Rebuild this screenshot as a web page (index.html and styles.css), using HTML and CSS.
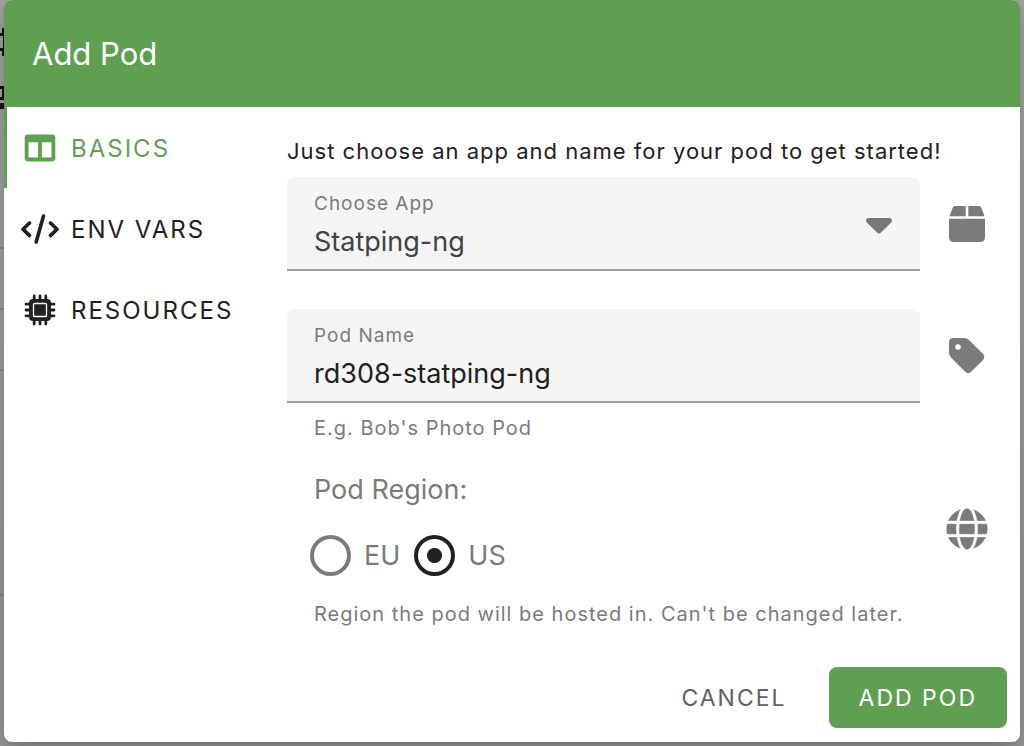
FILE: index.html
```html
<!DOCTYPE html>
<html lang="en">
<head>
  <meta charset="UTF-8" />
  <meta name="viewport" content="width=device-width, initial-scale=1" />
  <title>Add Pod</title>
  <link rel="stylesheet" href="styles.css">
</head>
<body>

  <!-- sliver of the page behind the dialog -->
  <svg class="behind" width="4" height="746" viewBox="0 0 4 746" aria-hidden="true">
    <path fill="#111" d="M2 28h2v5H2zM0 33h4v3H0zM3 36h1v12H3zM0 48h4v3H0zM2 51h2v5H2zM0 86h4v14H0v-3h2v-8H0zM0 103h4v6H0z"/>
    <path fill="#777" d="M0 247h4v2H0zM0 308h4v2H0zM0 369h4v2H0zM0 594h4v2H0z"/>
  </svg>

  <form class="dialog">
    <header class="dialog-header">
      <h1>Add Pod</h1>
    </header>

    <div class="dialog-body">
      <nav class="tabs">
        <a href="#basics" class="tab active">
          <svg width="38" height="32" viewBox="-62 -8 636 528" fill="currentColor" aria-hidden="true">
            <path d="M464 32H48C21.5 32 0 53.500 0 80v352c0 26.500 21.500 48 48 48h416c26.500 0 48-21.500 48-48V80c0-26.500-21.500-48-48-48zM224 416H64V160h160v256zm224 0H288V160h160v256z"/>
          </svg>
          Basics
        </a>
        <a href="#env" class="tab">
          <svg width="38" height="32" viewBox="0 0 38 32" fill="none" stroke="currentColor" stroke-width="3.600" stroke-linecap="round" stroke-linejoin="round" aria-hidden="true">
            <path d="M8.500 10L2 16.300L8.500 22.600M29.500 10L36 16.300L29.500 22.600M22.500 3L15.200 29"/>
          </svg>
          Env Vars
        </a>
        <a href="#resources" class="tab">
          <svg width="38" height="32" viewBox="0 0 38 32" aria-hidden="true">
            <path stroke="currentColor" stroke-width="2.800" stroke-linecap="round" d="M13.200 2V30M19 2V30M24.800 2V30M5 10.200H33M5 16H33M5 21.800H33"/>
            <rect x="8" y="5" width="22" height="22" rx="4" fill="currentColor"/>
            <rect x="12.500" y="9.500" width="13" height="13" rx="1" fill="currentColor" stroke="#fff" stroke-width="1.300"/>
          </svg>
          Resources
        </a>
      </nav>

      <section class="panel" id="basics">
        <p class="intro">Just choose an app and name for your pod to get started!</p>

        <div class="row">
          <div class="field">
            <label for="app">Choose App</label>
            <select id="app">
              <option>Statping-ng</option>
            </select>
            <svg class="caret" width="26" height="16" viewBox="0 0 26 16" fill="currentColor" aria-hidden="true">
              <path d="M2 0H24Q26 0 26 2.500Q26 3.800 25 4.800L15 14.500Q13 16.500 11 14.500L1 4.800Q0 3.800 0 2.500Q0 0 2 0z"/>
            </svg>
          </div>
          <svg class="icon" width="42" height="42" viewBox="0 0 42 42" fill="currentColor" aria-hidden="true">
            <path d="M9 3H19.700V13.300H3.400L6.600 5Q7.400 3 9 3zM22.300 3H33Q34.600 3 35.400 5L38.600 13.300H22.300zM3 15.800H39V34Q39 39 34 39H8Q3 39 3 34z"/>
          </svg>
        </div>

        <div class="row">
          <div class="field">
            <label for="name">Pod Name</label>
            <input type="text" id="name" value="rd308-statping-ng">
          </div>
          <svg class="icon" width="42" height="42" viewBox="0 0 42 42" fill="currentColor" fill-rule="evenodd" aria-hidden="true">
            <path d="M7.500 3H18.500Q21 3 23 5L36.800 18.800Q40 22 36.800 25.200L25.400 36.600Q22.200 39.800 19 36.600L5 22.600Q3 20.600 3 18V7.500Q3 3 7.500 3zM12 9.200a2.800 2.800 0 1 0 0 5.600a2.800 2.800 0 1 0 0-5.600z"/>
          </svg>
        </div>
        <p class="hint">E.g. Bob's Photo Pod</p>

        <div class="row region-row">
          <fieldset class="region">
            <legend>Pod Region:</legend>
            <div class="options">
              <label><input type="radio" name="region" value="eu">EU</label>
              <label><input type="radio" name="region" value="us" checked>US</label>
            </div>
          </fieldset>
          <svg class="icon" width="42" height="42" viewBox="-4 4 504 504" fill="currentColor" stroke="#fff" stroke-width="4" aria-hidden="true">
            <path d="M336.500 160C322 70.700 287.800 8 248 8s-74 62.700-88.500 152h177zM152 256c0 22.200 1.200 43.500 3.300 64h185.300c2.100-20.500 3.300-41.800 3.300-64s-1.200-43.500-3.300-64H155.300c-2.100 20.500-3.300 41.800-3.300 64zm324.700-96c-28.600-67.900-86.500-120.400-158-141.600 24.400 33.800 41.200 84.700 50 141.600h108zM177.200 18.400C105.800 39.600 47.800 92.100 19.300 160h108c8.700-56.900 25.500-107.800 49.900-141.600zM487.400 192H372.700c2.100 21 3.300 42.500 3.300 64s-1.200 43-3.300 64h114.600c5.500-20.500 8.600-41.800 8.600-64s-3.100-43.500-8.500-64zM120 256c0-21.500 1.200-43 3.300-64H8.600C3.200 212.500 0 233.800 0 256s3.200 43.500 8.600 64h114.600c-2-21-3.200-42.500-3.200-64zm39.500 96c14.500 89.300 48.700 152 88.500 152s74-62.700 88.500-152h-177zm159.300 141.600c71.400-21.200 129.400-73.700 158-141.600h-108c-8.800 56.900-25.600 107.800-50 141.600zM19.300 352c28.600 67.900 86.500 120.400 158 141.600-24.400-33.800-41.200-84.700-50-141.600h-108z"/>
          </svg>
        </div>
        <p class="hint">Region the pod will be hosted in. Can't be changed later.</p>
      </section>
    </div>

    <footer class="actions">
      <button type="button" class="btn">Cancel</button>
      <button type="submit" class="btn primary">Add Pod</button>
    </footer>
  </form>

</body>
</html>
```
FILE: styles.css
```css
* {
  box-sizing: border-box;
}
body {
  margin: 0;
  padding: 0 4px 4px;
  min-height: 100vh;
  background: linear-gradient(#a6a6a6, #999);
  font-family: Inter, "Liberation Sans", sans-serif;
  color: #212121;
}
.behind {
  position: absolute;
  top: 0;
  left: 0;
}
.dialog {
  display: flex;
  flex-direction: column;
  background: #fff;
  border-radius: 8px;
  box-shadow: 0 6px 20px rgba(0, 0, 0, 0.3);
  overflow: hidden;
}
.dialog-header {
  padding: 33px 28px 32px;
  background: #5f9f52;
  color: #fff;
}
h1 {
  margin: 0;
  font-size: 31px;
  line-height: 42px;
  font-weight: 400;
}
.dialog-body {
  display: flex;
}
.tabs {
  flex: 0 0 283px;
}
.tab {
  display: flex;
  align-items: center;
  gap: 12px;
  height: 81px;
  padding: 1px 0 0 17px;
  color: #212121;
  font-size: 24px;
  letter-spacing: 2px;
  text-decoration: none;
  text-transform: uppercase;
}
.tab.active {
  color: #5f9f52;
  box-shadow: inset 3px 0 #5f9f52;
}
.panel {
  flex: 1;
  padding: 29px 32px 0 0;
}
.intro {
  margin: 0 0 11px;
  font-size: 22px;
  line-height: 30px;
  letter-spacing: 1px;
}
.row {
  display: flex;
  align-items: center;
  gap: 26px;
}
.row + .row {
  margin-top: 38px;
}
.field {
  position: relative;
  flex: 1;
  height: 94px;
  padding: 14px 27px 0;
  background: #f5f5f5;
  border-bottom: 2px solid #9e9e9e;
  border-radius: 8px 8px 0 0;
}
.field label {
  display: block;
  font-size: 19px;
  line-height: 26px;
  letter-spacing: 1px;
  color: #7b7b7b;
}
.field input,
.field select {
  display: block;
  width: 100%;
  height: 48px;
  padding: 0;
  border: 0;
  outline: 0;
  background: none;
  appearance: none;
  font: inherit;
  font-size: 27px;
  color: #212121;
}
.field select {
  color: #424242;
}
.caret {
  position: absolute;
  top: 41px;
  right: 28px;
  color: #777;
  pointer-events: none;
}
.icon {
  flex: none;
  color: #7b7b7b;
}
.hint {
  margin: 12px 0 0 27px;
  font-size: 20px;
  line-height: 26px;
  letter-spacing: 1px;
  color: #7b7b7b;
}
.region-row {
  margin: 32px 0 17px;
}
.region {
  flex: 1;
  margin: 0;
  padding: 0 0 8px 23px;
  border: 0;
  color: #7b7b7b;
  font-size: 27px;
}
.region legend {
  padding: 0 4px;
  line-height: 34px;
}
.options {
  display: flex;
  gap: 14px;
  margin-top: 28px;
}
.options label {
  display: flex;
  align-items: center;
  gap: 13px;
}
.options input {
  appearance: none;
  width: 41px;
  height: 41px;
  margin: 0;
  border: 4px solid #7b7b7b;
  border-radius: 50%;
}
.options input:checked {
  border-color: #212121;
  background: radial-gradient(circle, #212121 7px, transparent 8px);
}
.actions {
  display: flex;
  justify-content: flex-end;
  gap: 12px;
  padding: 40px 13px 14px;
}
.btn {
  height: 61px;
  padding: 0 30px;
  border: 0;
  border-radius: 8px;
  background: none;
  color: #616161;
  font: inherit;
  font-size: 23px;
  letter-spacing: 2px;
  text-transform: uppercase;
}
.btn.primary {
  background: #5f9f52;
  color: #fff;
}
```
